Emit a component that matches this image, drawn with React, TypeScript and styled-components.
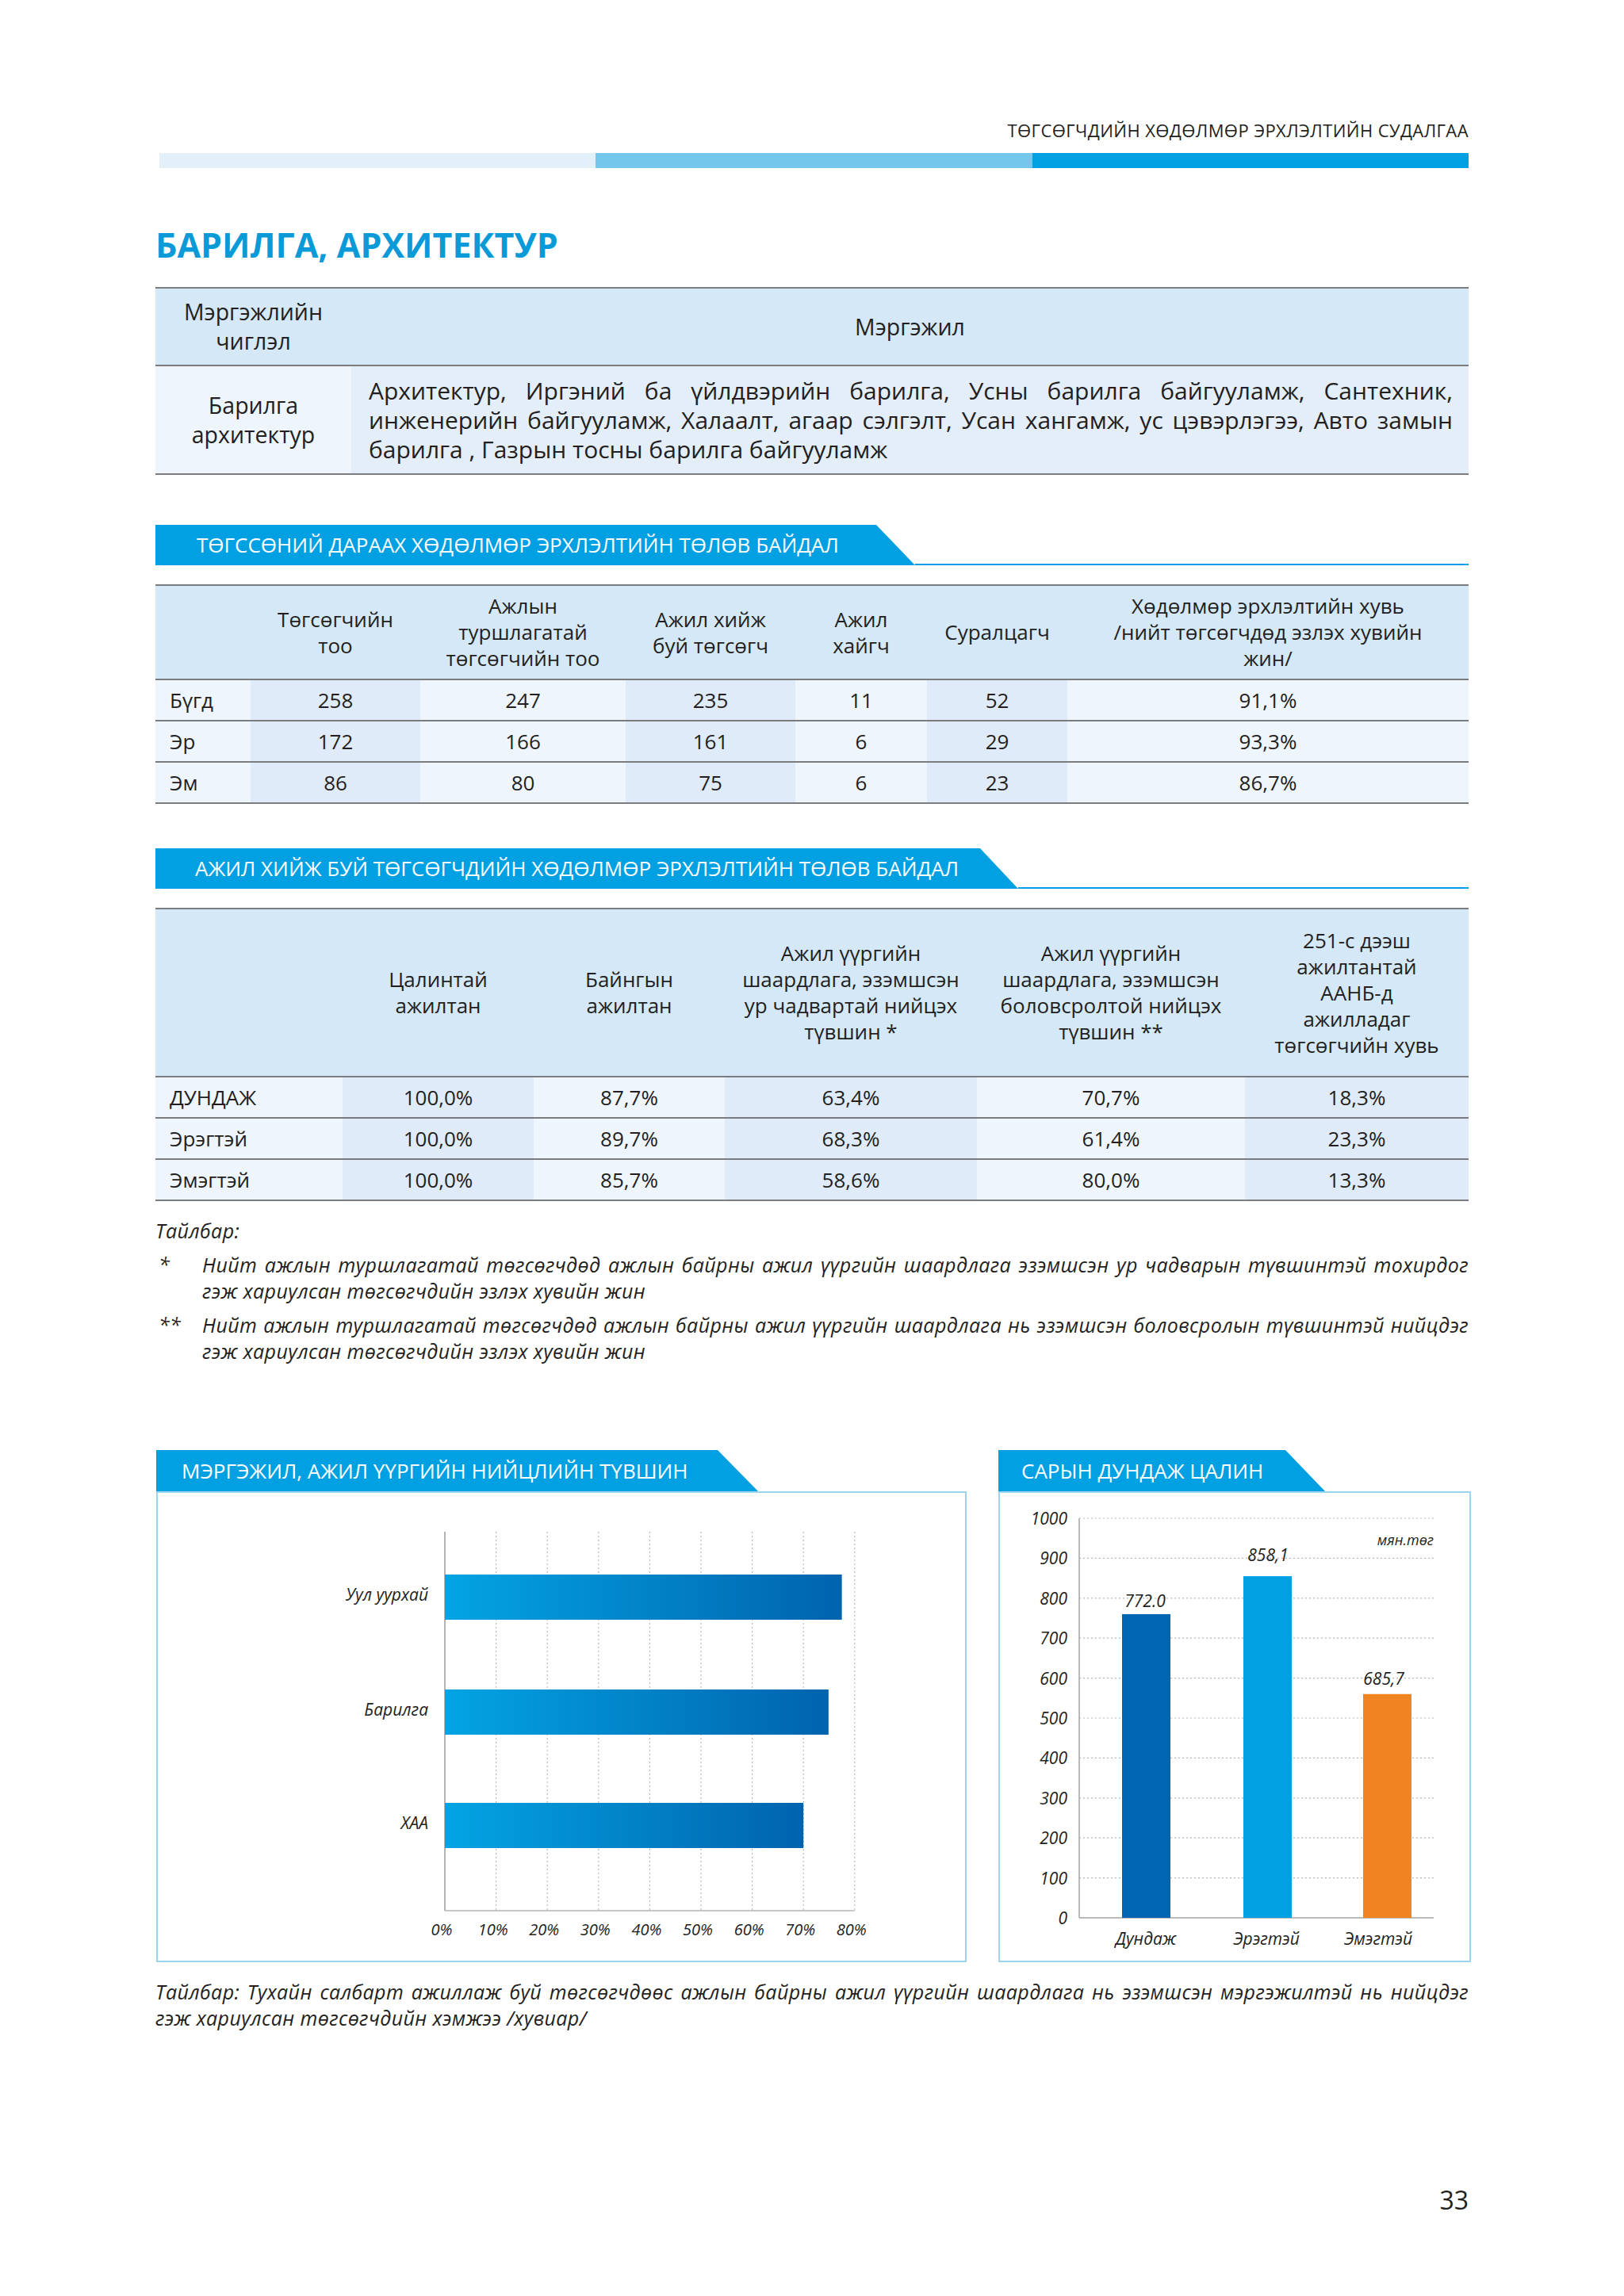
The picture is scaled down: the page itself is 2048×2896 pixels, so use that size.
import React from 'react';
import styled, { createGlobalStyle } from 'styled-components';

const GlobalStyle = createGlobalStyle`
  html, body { margin: 0; padding: 0; background: #ffffff; }
  body { font-family: "Open Sans", "Noto Sans", sans-serif; color: #231f20; }
`;

const BLUE = '#00a0e2';
const LINE = '#7b7c7f';
const HEAD_BG = '#d4e8f8';
const DARK_BG = '#dfebf8';
const LIGHT_BG = '#eef5fc';

const Page = styled.div`
  width: 2048px;
  height: 2896px;
  box-sizing: border-box;
  padding: 149px 196px 0 196px;
  display: flex;
  flex-direction: column;
  background: #fff;
`;

const RunningHead = styled.div`
  height: 30px;
  line-height: 30px;
  font-size: 22px;
  letter-spacing: 0.4px;
  text-align: right;
  color: #231f20;
`;

const TopBar = styled.div`
  margin-top: 14px;
  margin-left: 5px;
  height: 19px;
  display: flex;
`;

const Segment = styled.div<{ $color: string }>`
  flex: 1;
  background: ${(p) => p.$color};
`;

const Title = styled.h1`
  margin: 71px 0 0 0;
  font-size: 43px;
  line-height: 52px;
  font-weight: 700;
  color: #0a9ad8;
`;

/* ---------- profession table ---------- */
const ProfTable = styled.div`
  margin-top: 27px;
  border-top: 2px solid ${LINE};
`;

const ProfRow = styled.div<{ $h: number; $head?: boolean }>`
  display: grid;
  grid-template-columns: 247px 1fr;
  height: ${(p) => p.$h}px;
  border-bottom: 2px solid ${LINE};
  background: ${(p) => (p.$head ? HEAD_BG : 'transparent')};
  font-size: 28.5px;
  line-height: 37px;
`;

const ProfCell = styled.div<{ $bg?: string; $left?: boolean }>`
  display: flex;
  flex-direction: column;
  justify-content: center;
  align-items: ${(p) => (p.$left ? 'stretch' : 'center')};
  text-align: center;
  background: ${(p) => p.$bg || 'transparent'};
  padding: ${(p) => (p.$left ? '0 20px 0 22px' : '0')};
  font-size: ${(p) => (p.$left ? '30px' : 'inherit')};
`;

const JustLine = styled.span<{ $just?: boolean }>`
  display: block;
  text-align: ${(p) => (p.$just ? 'justify' : 'left')};
  text-align-last: ${(p) => (p.$just ? 'justify' : 'left')};
`;

/* ---------- section banner ---------- */
const Banner = styled.div<{ $top: number }>`
  margin-top: ${(p) => p.$top}px;
  display: flex;
  align-items: flex-end;
  height: 51px;
`;

const BannerShape = styled.div<{ $w: number; $slant: number; $pad: number }>`
  width: ${(p) => p.$w}px;
  height: 100%;
  background: ${BLUE};
  clip-path: polygon(0 0, ${(p) => p.$w - p.$slant}px 0, 100% 100%, 0 100%);
  color: #fff;
  font-size: 26px;
  line-height: 51px;
  padding-left: ${(p) => p.$pad}px;
  box-sizing: border-box;
  white-space: nowrap;
`;

const BannerLine = styled.div`
  flex: 1;
  height: 2px;
  background: ${BLUE};
`;

/* ---------- data tables ---------- */
const DataTable = styled.div`
  margin-top: 24px;
  border-top: 2px solid ${LINE};
`;

const DataRow = styled.div<{ $cols: string; $h: number; $head?: boolean }>`
  display: grid;
  grid-template-columns: ${(p) => p.$cols};
  height: ${(p) => p.$h}px;
  border-bottom: 2px solid ${LINE};
  background: ${(p) => (p.$head ? HEAD_BG : 'transparent')};
  font-size: 26px;
  line-height: 33px;
`;

const DataCell = styled.div<{ $shade?: 'dark' | 'light'; $label?: boolean }>`
  display: flex;
  align-items: center;
  justify-content: ${(p) => (p.$label ? 'flex-start' : 'center')};
  text-align: center;
  padding-left: ${(p) => (p.$label ? '18px' : '0')};
  background: ${(p) => (p.$shade === 'dark' ? DARK_BG : p.$shade === 'light' ? LIGHT_BG : 'transparent')};
`;

/* ---------- notes ---------- */
const Notes = styled.div`
  margin-top: 21px;
  font-style: italic;
  font-size: 25px;
  letter-spacing: 0.4px;
  line-height: 33px;
  display: flex;
  flex-direction: column;
  gap: 10px;
`;

const Note = styled.div`
  display: grid;
  grid-template-columns: 59px 1fr;
`;

const NoteMark = styled.span`
  padding-left: 4px;
`;

/* ---------- charts ---------- */
const Charts = styled.div`
  margin-top: 108px;
  display: grid;
  grid-template-columns: 1022px 1fr;
  gap: 40px;
  margin-left: 1px;
  margin-right: -2px;
`;

const ChartCol = styled.div`
  display: flex;
  flex-direction: column;
`;

const ChartBanner = styled.div<{ $w: number; $slant: number; $pad: number }>`
  width: ${(p) => p.$w}px;
  height: 52px;
  background: ${BLUE};
  clip-path: polygon(0 0, ${(p) => p.$w - p.$slant}px 0, 100% 100%, 0 100%);
  color: #fff;
  font-size: 26px;
  line-height: 52px;
  padding-left: ${(p) => p.$pad}px;
  box-sizing: border-box;
  white-space: nowrap;
`;

const ChartBox = styled.div`
  height: 594px;
  box-sizing: border-box;
  border: 2px solid #9ed4ee;
  background: #fff;
`;

const Caption = styled.div`
  margin-top: 21px;
  font-style: italic;
  font-size: 25px;
  letter-spacing: 0.4px;
  line-height: 33px;
`;

const PageNum = styled.div`
  margin-top: 193px;
  text-align: right;
  font-size: 32px;
  line-height: 40px;
`;

/* ---------- data ---------- */
const t2cols = '120px 214px 259px 214px 166px 177px 1fr';
const t2head = [
  '',
  'Төгсөгчийн\nтоо',
  'Ажлын\nтуршлагатай\nтөгсөгчийн тоо',
  'Ажил хийж\nбуй төгсөгч',
  'Ажил\nхайгч',
  'Суралцагч',
  'Хөдөлмөр эрхлэлтийн хувь\n/нийт төгсөгчдөд эзлэх хувийн\nжин/',
];
const t2rows = [
  ['Бүгд', '258', '247', '235', '11', '52', '91,1%'],
  ['Эр', '172', '166', '161', '6', '29', '93,3%'],
  ['Эм', '86', '80', '75', '6', '23', '86,7%'],
];

const t3cols = '236px 241px 241px 318px 338px 1fr';
const t3head = [
  '',
  'Цалинтай\nажилтан',
  'Байнгын\nажилтан',
  'Ажил үүргийн\nшаардлага, эзэмшсэн\nур чадвартай нийцэх\nтүвшин *',
  'Ажил үүргийн\nшаардлага, эзэмшсэн\nболовсролтой нийцэх\nтүвшин **',
  '251-с дээш\nажилтантай\nААНБ-д\nажилладаг\nтөгсөгчийн хувь',
];
const t3rows = [
  ['ДУНДАЖ', '100,0%', '87,7%', '63,4%', '70,7%', '18,3%'],
  ['Эрэгтэй', '100,0%', '89,7%', '68,3%', '61,4%', '23,3%'],
  ['Эмэгтэй', '100,0%', '85,7%', '58,6%', '80,0%', '13,3%'],
];

const Lines: React.FC<{ text: string }> = ({ text }) => (
  <span>
    {text.split('\n').map((l, i) => (
      <React.Fragment key={i}>
        {i > 0 && <br />}
        {l}
      </React.Fragment>
    ))}
  </span>
);

const shadeFor = (i: number): 'dark' | 'light' => (i % 2 === 1 ? 'dark' : 'light');

const DataTableView: React.FC<{ cols: string; head: string[]; rows: string[][]; headH: number }> = ({
  cols,
  head,
  rows,
  headH,
}) => (
  <DataTable>
    <DataRow $cols={cols} $h={headH} $head>
      {head.map((h, i) => (
        <DataCell key={i}>
          <Lines text={h} />
        </DataCell>
      ))}
    </DataRow>
    {rows.map((r, ri) => (
      <DataRow key={ri} $cols={cols} $h={50}>
        {r.map((c, ci) => (
          <DataCell key={ci} $shade={shadeFor(ci)} $label={ci === 0}>
            {c}
          </DataCell>
        ))}
      </DataRow>
    ))}
  </DataTable>
);

/* ---------- chart 1 ---------- */
const SvgText = styled.text`
  font-family: "Open Sans", "Noto Sans", sans-serif;
  font-style: italic;
  fill: #231f20;
`;

const MatchChart: React.FC = () => {
  const x0 = 362;
  const step = 64.6;
  const top = 49;
  const bottom = 527;
  const bars = [
    { label: 'Уул уурхай', v: 77.5, y: 103 },
    { label: 'Барилга', v: 74.9, y: 248 },
    { label: 'ХАА', v: 70, y: 391 },
  ];
  return (
    <svg width={1018} height={590} viewBox="0 0 1018 590">
      <defs>
        <linearGradient id="hbar" x1="0" x2="1" y1="0" y2="0">
          <stop offset="0" stopColor="#03a4e3" />
          <stop offset="1" stopColor="#0063ae" />
        </linearGradient>
      </defs>
      {Array.from({ length: 8 }, (_, i) => (
        <line
          key={i}
          x1={x0 + (i + 1) * step}
          x2={x0 + (i + 1) * step}
          y1={top}
          y2={bottom}
          stroke="#b9b9b9"
          strokeWidth={1.2}
          strokeDasharray="2 3"
        />
      ))}
      <line x1={x0} x2={x0 + 8 * step} y1={bottom} y2={bottom} stroke="#b5b5b5" strokeWidth={1.5} />
      <line x1={x0} x2={x0} y1={top} y2={bottom} stroke="#9c9c9c" strokeWidth={1.5} />
      {bars.map((b) => (
        <g key={b.label}>
          <rect x={x0} y={b.y} width={b.v * (step / 10)} height={57} fill="url(#hbar)" />
          <SvgText x={341} y={b.y + 25} textAnchor="end" dominantBaseline="central" fontSize={21}>
            {b.label}
          </SvgText>
        </g>
      ))}
      {Array.from({ length: 9 }, (_, i) => (
        <SvgText key={i} x={x0 + i * step - 4} y={550} textAnchor="middle" dominantBaseline="central" fontSize={20}>
          {`${i * 10}%`}
        </SvgText>
      ))}
    </svg>
  );
};

/* ---------- chart 2 ---------- */
const SalaryChart: React.FC = () => {
  const ax = 100;
  const base = 536;
  const k = 0.504;
  const right = 547;
  const bars = [
    { label: 'Дундаж', v: 760, shown: '772.0', color: '#0066b3', x: 154, lx: 183, ly: 136 },
    { label: 'Эрэгтэй', v: 855, shown: '858,1', color: '#00a0e2', x: 307, lx: 338, ly: 78 },
    { label: 'Эмэгтэй', v: 560, shown: '685,7', color: '#f08421', x: 458, lx: 484, ly: 234 },
  ];
  const xl = [184, 336, 477];
  return (
    <svg width={592} height={590} viewBox="0 0 592 590">
      {Array.from({ length: 10 }, (_, i) => {
        const y = base - (i + 1) * 100 * k;
        return (
          <line key={i} x1={ax} x2={right} y1={y} y2={y} stroke="#b9b9b9" strokeWidth={1.2} strokeDasharray="2 3" />
        );
      })}
      {Array.from({ length: 11 }, (_, i) => (
        <SvgText key={i} x={85} y={base - i * 100 * k} textAnchor="end" dominantBaseline="central" fontSize={21}>
          {i * 100}
        </SvgText>
      ))}
      <line x1={ax} x2={ax} y1={base - 1000 * k} y2={base} stroke="#a5a5a5" strokeWidth={1.5} />
      <line x1={ax} x2={right} y1={base} y2={base} stroke="#a5a5a5" strokeWidth={1.5} />
      {bars.map((b, i) => (
        <g key={b.label}>
          <rect x={b.x} y={base - b.v * k} width={61} height={b.v * k} fill={b.color} />
          <SvgText x={b.lx} y={b.ly} textAnchor="middle" dominantBaseline="central" fontSize={21}>
            {b.shown}
          </SvgText>
          <SvgText x={xl[i]} y={562} textAnchor="middle" dominantBaseline="central" fontSize={21}>
            {b.label}
          </SvgText>
        </g>
      ))}
      <SvgText x={right} y={59} textAnchor="end" dominantBaseline="central" fontSize={18}>
        мян.төг
      </SvgText>
    </svg>
  );
};

export default function App() {
  return (
    <>
      <GlobalStyle />
      <Page>
        <RunningHead>ТӨГСӨГЧДИЙН ХӨДӨЛМӨР ЭРХЛЭЛТИЙН СУДАЛГАА</RunningHead>
        <TopBar>
          <Segment $color="#e3eff9" />
          <Segment $color="#74c6ec" />
          <Segment $color="#00a0e3" />
        </TopBar>
        <Title>БАРИЛГА, АРХИТЕКТУР</Title>

        <ProfTable>
          <ProfRow $h={96} $head>
            <ProfCell>
              <Lines text={'Мэргэжлийн\nчиглэл'} />
            </ProfCell>
            <ProfCell>Мэргэжил</ProfCell>
          </ProfRow>
          <ProfRow $h={135}>
            <ProfCell $bg={LIGHT_BG}>
              <Lines text={'Барилга\nархитектур'} />
            </ProfCell>
            <ProfCell $bg="#e3eef9" $left>
              <JustLine $just>Архитектур, Иргэний ба үйлдвэрийн барилга, Усны барилга байгууламж, Сантехник,</JustLine>
              <JustLine $just>инженерийн байгууламж, Халаалт, агаар сэлгэлт, Усан хангамж, ус цэвэрлэгээ,  Авто замын</JustLine>
              <JustLine>барилга , Газрын тосны барилга байгууламж</JustLine>
            </ProfCell>
          </ProfRow>
        </ProfTable>

        <Banner $top={63}>
          <BannerShape $w={958} $slant={49} $pad={52}>
            ТӨГССӨНИЙ ДАРААХ ХӨДӨЛМӨР ЭРХЛЭЛТИЙН ТӨЛӨВ БАЙДАЛ
          </BannerShape>
          <BannerLine />
        </Banner>
        <DataTableView cols={t2cols} head={t2head} rows={t2rows} headH={117} />

        <Banner $top={56}>
          <BannerShape $w={1088} $slant={48} $pad={50}>
            АЖИЛ ХИЙЖ БУЙ ТӨГСӨГЧДИЙН ХӨДӨЛМӨР ЭРХЛЭЛТИЙН ТӨЛӨВ БАЙДАЛ
          </BannerShape>
          <BannerLine />
        </Banner>
        <DataTableView cols={t3cols} head={t3head} rows={t3rows} headH={210} />

        <Notes>
          <div>Тайлбар:</div>
          <Note>
            <NoteMark>*</NoteMark>
            <div>
              <JustLine $just>
                Нийт ажлын туршлагатай төгсөгчдөд ажлын байрны ажил үүргийн шаардлага  эзэмшсэн ур чадварын түвшинтэй тохирдог
              </JustLine>
              <JustLine>гэж хариулсан төгсөгчдийн эзлэх хувийн жин</JustLine>
            </div>
          </Note>
          <Note>
            <NoteMark>**</NoteMark>
            <div>
              <JustLine $just>
                Нийт ажлын туршлагатай төгсөгчдөд ажлын байрны ажил үүргийн шаардлага нь эзэмшсэн боловсролын түвшинтэй нийцдэг
              </JustLine>
              <JustLine>гэж хариулсан төгсөгчдийн эзлэх хувийн жин</JustLine>
            </div>
          </Note>
        </Notes>

        <Charts>
          <ChartCol>
            <ChartBanner $w={759} $slant={51} $pad={32}>
              МЭРГЭЖИЛ, АЖИЛ ҮҮРГИЙН НИЙЦЛИЙН ТҮВШИН
            </ChartBanner>
            <ChartBox>
              <MatchChart />
            </ChartBox>
          </ChartCol>
          <ChartCol>
            <ChartBanner $w={412} $slant={50} $pad={29}>
              САРЫН ДУНДАЖ ЦАЛИН
            </ChartBanner>
            <ChartBox>
              <SalaryChart />
            </ChartBox>
          </ChartCol>
        </Charts>

        <Caption>
          <JustLine $just>
            Тайлбар: Тухайн салбарт ажиллаж буй төгсөгчдөөс ажлын байрны ажил үүргийн шаардлага нь эзэмшсэн мэргэжилтэй нь нийцдэг
          </JustLine>
          <JustLine>гэж хариулсан төгсөгчдийн хэмжээ /хувиар/</JustLine>
        </Caption>

        <PageNum>33</PageNum>
      </Page>
    </>
  );
}
